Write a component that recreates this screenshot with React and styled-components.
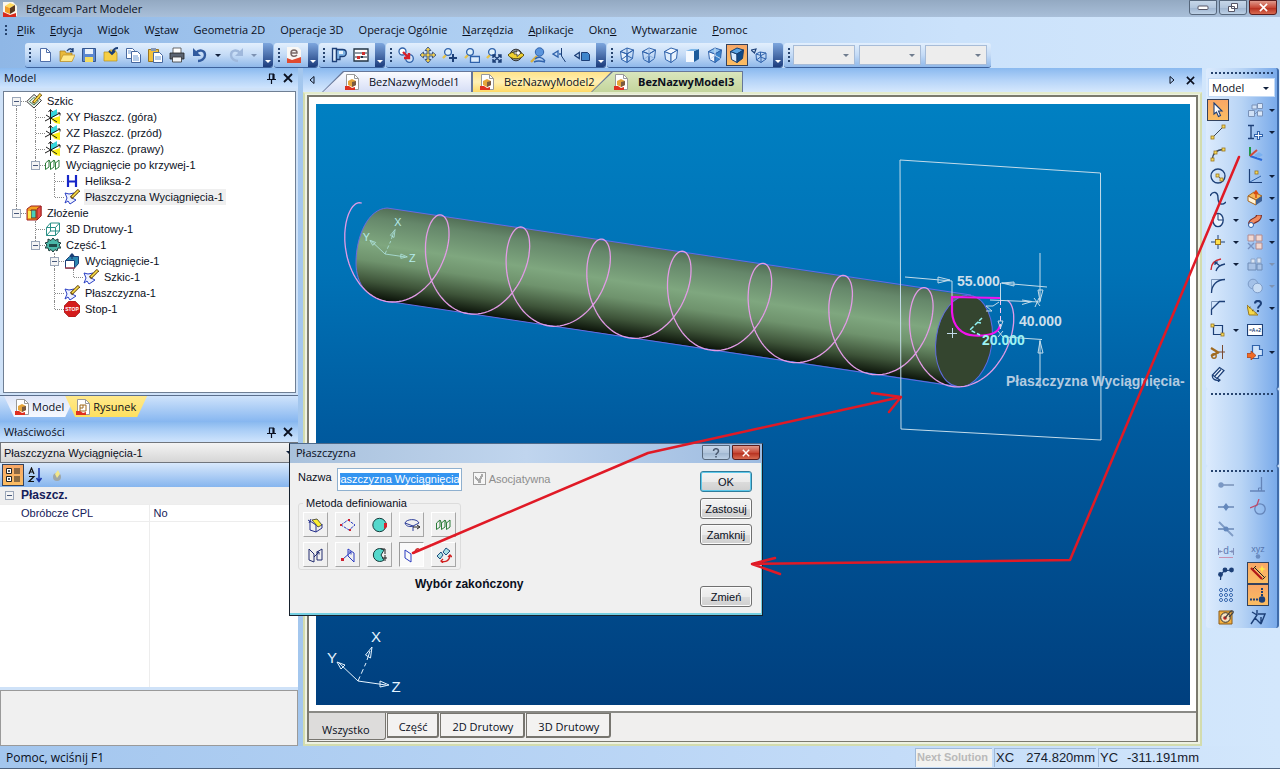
import React from 'react';
import styled, { createGlobalStyle, css } from 'styled-components';

const ui = '"Open Sans", "Noto Sans", sans-serif';
const sans = '"Liberation Sans", Arial, sans-serif';
const navy = '#1c3f77';
const blue = '#2f62ab';

const Global = createGlobalStyle`
  * { box-sizing: border-box; }
  body { margin: 0; font-family: ${ui}; font-size: 11px; color: #0a0f1c; }
  button, input, select { font: inherit; color: inherit; margin: 0; padding: 0; border: 0; background: none; }
  ul { list-style: none; margin: 0; padding: 0; }
  svg { display: block; flex: none; }
`;

/* ---------- icons ---------- */

const L = ({ d, c = navy, w = 1, f = 'none', ...r }) => (
  <path d={d} stroke={c} strokeWidth={w} fill={f} {...r} />
);
const Q = ({ x, y, s = 3 }) => (
  <rect x={x} y={y} width={s} height={s} fill="#f7dc5a" stroke="#9a7420" strokeWidth=".8" />
);
const Lens = ({ x = 6, y = 5, c = '#e6c34a' }) => (
  <>
    <L d={`M${x - 2} ${y + 3}L${x - 5} ${y + 6}`} c={c} w={2.4} />
    <circle cx={x} cy={y} r="3.4" fill="#dff0fb" stroke={blue} strokeWidth="1.3" />
  </>
);
/* left face, right face and lid of a box seen from above */
const Cube = ({ c = blue, inner = 'none', front = 'none', side = 'none', top = 'none' }) => (
  <>
    <L d="M1.500 4.500L8 7v8.500L2.500 12.500z" c={c} f={front} />
    <L d="M1.500 4.500L8 1l6.500 2L8 7z" c={c} f={top} />
    <L d="M8 7l6.500-4-1 8.500L8 15.500z" c={c} f={side} />
    {inner !== 'none' && <L d="M8 1v7.500L2.500 12.500M8 8.500l5.500 3" c={inner} />}
  </>
);
const PlaneFeature = () => (
  <>
    <L d="M1 4l4 1 5-1-2 5 4 2-6 4-2-3-3 2 2-5z" c="#2a3fc4" f="#eef2ff" />
    <L d="M7 9l8-8" c="#6a4c10" w={3.200} />
    <L d="M8 8l6.500-6.500" c="#ffe14a" w={1.600} />
  </>
);
const BasePlane = () => (
  <>
    <path d="M5 4l7-4v6l-7 4z" fill="#35d6dd" />
    <path d="M6 10l9-3v8l-5-1z" fill="#fbee16" />
    <L d="M5.500 1v14M0 12l15-8M1 6l11 7" c="#1a1a1a" />
    <L d="M3.500 3l2-2.500 2 2.500M12.500 4H15v2.500" c="#1a1a1a" />
  </>
);
const Coil = ({ c = '#2c7d3a' }) => (
  <L d="M.500 12.500V6L4 3v7zM5.500 12.500V6L9 3v7zM10.500 12.500V6L14 3v7zM4 3l1.500 3M9 3l1.500 3" c={c} />
);
const PageMark = ({ yellow }) => (
  <>
    <path d="M2.500.5h8l4 4v11h-12z" fill="#fff" stroke="#9a9a9a" />
    <L d="M10.500.5v4h4" c="#9a9a9a" />
    {yellow ? (
      <L d="M5 6h6v6H5zM8 6v3H5" c="#a06a1c" />
    ) : (
      <path d="M4 7l4-2 4 2v4l-4 2-4-2z" fill="#e6a53a" />
    )}
    {!yellow && <path d="M8 8l4-1v4l-4 2z" fill="#7a5a40" />}
    <path d="M1 12h4l3 2 3-1v3H1z" fill="#df3020" />
  </>
);

const glyphs = {
  app: (
    <>
      <path d="M1 1h10l4 4v10H1z" fill="#fbf6ea" />
      <path d="M3 5l5-3 5 2-5 3z" fill="#ffd95c" />
      <path d="M3 5l5 2v6l-5-2z" fill="#f09a28" />
      <path d="M8 7l5-3v6l-5 3z" fill="#5a3a20" />
      <path d="M1 11l7 3 6-2v4H1z" fill="#d8281c" />
    </>
  ),
  page: <PageMark />,
  drawing: <PageMark yellow />,
  new: <><path d="M3.500 1.500h6l4 4v9h-10z" fill="#fdfeff" stroke="#4f6ea8" /><L d="M9.500 1.500v4h4" c="#4f6ea8" /></>,
  open: <><path d="M1 4h5l1 2h6v8H1z" fill="#e9b93a" stroke="#a57a1a" strokeWidth=".7" /><path d="M4 8h12l-3 6.500H1z" fill="#ffe88a" stroke="#b98c22" strokeWidth=".7" /><L d="M8 4c2-3 5-3 6 0M14 1v3.500h-3" c={navy} w={1.300} /></>,
  save: <><path d="M1.500 1.500h13v13h-13z" fill="#5a86cf" stroke="#34568f" /><path d="M4 2h8v5H4z" fill="#e9f1fb" /><path d="M4 10h8v5H4z" fill="#f3dc62" /></>,
  close: <><path d="M1 5h5l1-2h5l2 3v8H1z" fill="#f7cf45" stroke="#b38c1c" strokeWidth=".7" /><L d="M15 1c-4 0-5 2-6 5M6 4l3 3 3-3" c={navy} w={1.800} /></>,
  copy: <><path d="M1.500 1.500h6l2 2v8h-8z" fill="#fff" stroke="#47689f" /><path d="M6.500 4.500h6l3 3v8h-9z" fill="#fff" stroke="#47689f" /><L d="M8 9h5M8 11h6M8 13h6M3 4h3M3 6h3" c="#6c9ad4" /></>,
  paste: <><path d="M1.500 2.500h10v12h-10z" fill="#f2c13c" stroke="#9a7520" /><path d="M4 1h5v3H4z" fill="#8597b5" /><path d="M6.500 5.500h6l3 3v7h-9z" fill="#fff" stroke="#47689f" /><L d="M8 10h6M8 12h6" c="#6c9ad4" /></>,
  print: <><path d="M4 1h8v6H4z" fill="#fff" stroke="#444" strokeWidth=".8" /><path d="M1 6h14v6H1z" fill="#5b6472" stroke="#222" strokeWidth=".8" /><path d="M3.500 10h9v5h-9z" fill="#f4f6f8" stroke="#333" strokeWidth=".8" /></>,
  undo: <><L d="M4 6c3-4 9-3 9 2 0 4-4 6-7 6" c="#315a9e" w={2.400} /><path d="M1 1v8h8z" fill="#315a9e" /></>,
  redo: <><L d="M12 6c-3-4-9-3-9 2 0 4 4 6 7 6" c="#9fb8dc" w={2.400} /><path d="M15 1v8H7z" fill="#9fb8dc" /></>,
  e: <><path d="M1 0h11l3 3v13H1z" fill="#f9f7f4" /><path d="M1 11l5 2 9-3v6H1z" fill="#e04a30" /><L d="M5 6h6c0-4-6-4-6 0s4 4 6 2" c="#7a6a68" w={1.500} /></>,
  part: <><L d="M1.500 1.500h4v13h-4z" c={navy} w={1.300} f="#dcecfb" /><path d="M5.500 2.500h6c5 0 5 7 0 7H9v3H5.500z" fill="#7fb4e4" stroke={navy} strokeWidth="1.300" /><path d="M8 4h4v3H8z" fill="#e8f3fd" /></>,
  sliders: <><path d="M1 2h14v12H1z" fill="#fff" stroke="#234" strokeWidth="1.300" /><L d="M2 6h12M2 10h12" c="#234" /><path d="M4 9h3v3H4zM9 5h3v3H9z" fill="#cc3030" /><path d="M8 9h2v2H8z" fill="#234" /></>,
  pair: <><circle cx="4.500" cy="4.500" r="3.500" fill="#fff" stroke={blue} strokeWidth="1.300" /><circle cx="11.500" cy="11.500" r="3.800" fill="#cfe4fa" stroke={blue} strokeWidth="1.300" /><path d="M5 5l5 5M6 11h5V6" stroke="#d8202a" strokeWidth="2.400" fill="none" /></>,
  pan: <path d="M8 0l3 3.500H9V7h3.500V5L16 8l-3.500 3V9H9v3.500h2L8 16l-3-3.500h2V9H3.500v2L0 8l3.500-3v2H7V3.500H5z" fill="#f5d04a" stroke="#344f80" strokeWidth=".9" />,
  zoomIn: <><Lens /><L d="M11 7v8M7 11h8" c={navy} w={2} /></>,
  zoomBox: <><Lens /><path d="M6.500 9.500h9v6h-9z" fill="#dcecfc" stroke={blue} strokeWidth="1.300" /></>,
  zoomFit: <><Lens /><L d="M7 8l8 7M15 8l-8 7M7 11V8h3M12 8h3v3M15 12v3h-3M10 15H7v-3" c={navy} w={1.400} /></>,
  orbit: <><circle cx="8" cy="8" r="5.800" fill="#8a929e" stroke="#333" /><path d="M0 8c3-4 13-4 16 0-3 5-13 5-16 0z" fill="#f0d030" stroke="#5a5010" /><path d="M6 5h3V2.500L13 6 9 9.500V7H6z" fill="#fff" stroke="#333" strokeWidth=".8" /></>,
  rotate: <><L d="M1 15l6-6" c="#d8b040" w={2.400} /><circle cx="9.500" cy="5" r="4.200" fill="#5a94dc" stroke={blue} /><L d="M5 12c3-3 7-2 10 2M4 15c4-2 7-1 11 0" c={blue} w={1.400} /></>,
  viewOpen: <><L d="M1 7l5-3v6zM7 7h3" c={blue} w={1.300} /><L d="M9.500 1v8l4 6" c={navy} /></>,
  viewBody: <><L d="M.800 8.500l4.500-3v6z" c={navy} w={1.300} /><path d="M7.500 5.500h6l2 2v6h-8z" fill="#3e86cc" stroke={navy} /></>,
  wire: <Cube inner={blue} front="#e4f0fc" />,
  wireHidden: <Cube inner="#8fb2de" />,
  wireOutline: <Cube front="#dcebfb" top="#f2f8ff" side="#e8f2fd" />,
  shadedSoft: <><path d="M1 4h8v11H1z" fill="#f4f9ff" /><path d="M9 4l5-2v10l-5 3z" fill="#1c5c9c" /><path d="M1 4l5-2h8L9 4z" fill="#7cb6e8" /></>,
  shadedEdge: <Cube front="#f3f9ff" side="#3c86cc" top="#8fc2ee" inner="#c8dcf2" />,
  shaded: <Cube front="#d5eaff" side="#0f4a88" top="#5aa5e4" c="#163f70" />,
  eyeCube: <><L d="M0 3l5-1-1.500 4z" c={navy} w={1.200} /><L d="M5 7l5 1.500v7L5.500 13zM5 7l4-2 6 1-5 2.500M15 6v6l-5 3.500M9.500 5v5l-4 3M9.500 10l5.500 2" c={blue} /></>,
  sketch: <><L d="M.700 8.500L8 1.500l7.500 6L8 15z" c="#3a3a3a" f="#eef2ee" /><L d="M3.500 8.500L8 4.500l4.500 3.500L8 12z" c="#3a7a50" f="#fff" /><L d="M7 10l8-9" c="#7a5810" w={3.200} /><L d="M8 9l6.500-7.500" c="#ffe14a" w={1.600} /></>,
  basePlane: <BasePlane />,
  coil: <Coil />,
  helix: <L d="M4 2v12M12 2v12M4 8.500h8" c="#1626c8" w={2.200} />,
  plane: <PlaneFeature />,
  assembly: <><path d="M1 4l4-3h10v10l-4 4H1z" fill="#f4a020" stroke="#a02020" /><path d="M5 5h5v8H5z" fill="#48d0b8" stroke="#7a2a10" /><path d="M11 4l4-3v10l-4 4z" fill="#e8504a" stroke="#a02020" /><path d="M2 6h3v7H2z" fill="#ffe84a" /></>,
  wire3d: <L d="M1.500 6.500h9v8h-9zM1.500 6.500l4-4.500h9l-4 4.500M14.500 2v8l-4 4.500M5.500 2v8l-4 4.500M5.500 10h9" c="#2a9086" f="none" />,
  gear: <><path d="M0 6l3-1 0-3 3 1.500L8 1l2 2.500L13 2v3l3 1-2 2 2 3-3 0-1 3-2-1.500L8 15l-2-2.500L4 14l-1-3-3 0 2-3z" fill="#4ab8a8" stroke="#1c3a38" /><path d="M4 7h8v3H4z" fill="#1f4a48" /></>,
  extrude: <><path d="M1.500 7.500l4-4h9v7l-4 4.500h-9z" fill="#2a86b0" stroke={navy} /><path d="M1.500 7.500h9V15h-9z" fill="#fff" stroke={navy} /><L d="M1 15h10" c="#d03030" /><L d="M8 6V1M6 3l2-2 2 2" c={navy} w={1.300} /></>,
  stop: <><path d="M5 0h6l5 5v6l-5 5H5l-5-5V5z" fill="#d41c1c" stroke="#8a1010" strokeWidth=".6" /><text x="8" y="10" fontSize="5" fontWeight="700" fill="#fff" textAnchor="middle" fontFamily="Liberation Sans">STOP</text></>,
  categories: <><path d="M1.500 1.500h5v5h-5zM1.500 9.500h5v5h-5z" fill="#fff" stroke="#222" /><L d="M3 4h2M4 3v2M3 12h2M4 11v2M9 2h6M9 4h6M9 6h6M9 10h6M9 12h6M9 14h6" c="#222" /></>,
  sortAz: <><L d="M2 7l2.500-6L7 7M3 5h3M2 9.500h5l-5 5h5" c="#111" w={1.200} /><L d="M12 1v13M9.500 11l2.500 3.500 2.500-3.500" c="#1432a8" w={1.500} /></>,
  star: <><circle cx="8" cy="10" r="4" fill="#9fa7a8" /><path d="M9 3l2 4-3 4-2-4z" fill="#f2e68a" /></>,
  pointer: <path d="M4 1l8 8H8.500l2 4.500-2 1-2-4.500L4 12z" fill="#fff" stroke={navy} strokeWidth="1.100" />,
  line: <><L d="M2.500 13.500l11-11" c="#3a4858" /><Q x={1} y={12} /><Q x={12} y={1} /></>,
  arc: <><L d="M2.500 13.500c0-6 4-10 11-10" c="#3a4858" w={1.300} /><Q x={1} y={12} /><Q x={4} y={5} /><Q x={12} y={2} /></>,
  circle: <><circle cx="8" cy="8" r="7" fill="none" stroke={navy} strokeWidth="1.300" /><L d="M8 8l4 4" c="#5a6a7a" /><Q x={6} y={6} /><Q x={10} y={10} /></>,
  spline: <L d="M0 6c3-6 8-4 8 2s4 8 8 4" c={navy} w={1.400} />,
  ellipse: <><ellipse cx="8" cy="8" rx="5.200" ry="6.700" fill="#eaf4ff" stroke={navy} strokeWidth="1.300" /><L d="M8 2v6h5" c={navy} /></>,
  point: <><L d="M8 1v14M1 8h14" c={navy} /><rect x="5.500" y="5.500" width="5" height="5" fill="#ffe04a" stroke="#9a7420" /></>,
  offset: <><L d="M1 14c0-7 4-10 10-11" c="#d22a30" w={1.400} /><L d="M6 15c1-4 4-6 9-7" c={navy} w={1.300} /><L d="M10 10L5 6M5 9V6h3" c={navy} w={1.200} /></>,
  fillet: <><L d="M1.500 15V1.500H15" c="#7a94b8" /><L d="M1.500 15C1.500 7 7 1.500 15 1.500" c={navy} w={1.300} /></>,
  chamfer: <><L d="M1.500 15V1.500H15" c="#7a94b8" /><L d="M1.500 15V9.500l8-8H15" c={navy} w={1.300} /></>,
  rect: <><path d="M3.500 3.500h9v9h-9z" fill="none" stroke={navy} strokeWidth="1.200" /><Q x={1} y={2} /><Q x={11} y={11} /></>,
  trim: <><L d="M1 4l8 5M1 12l8-4" c="#a06a20" w={2.200} /><circle cx="4" cy="12" r="2.200" fill="none" stroke="#a06a20" strokeWidth="1.400" /><L d="M12.500 1v14M9 8h6" c="#7a4a30" /></>,
  clip: <><path d="M2.500 9l7-7.500 4.500 3-7 8z" fill="#eaf4ff" stroke={navy} strokeWidth="1.200" /><L d="M4.500 10.500l6.500-7M2.500 9c-1 4 3 6 7 5M7 12l3 2-2 2" c={navy} w={1.200} /></>,
  array3d: <><path d="M1.500 8.500h6v6h-6zM5 3h5v4H5z" fill="#cfe0f6" stroke="#7a92b8" /><path d="M10.500 1.500h5v5h-5zM10.500 9h5v5h-5z" fill="#dbe8f9" stroke="#7a92b8" /><L d="M8 12l4-4" c="#7a92b8" /></>,
  dim: <><L d="M1 1.500h6M4 1.500v13M1 14.500h6" c={navy} w={1.300} /><path d="M10.500 7.500h2v3h3v2h-3v3h-2v-3h-3v-2h3z" fill="#fff" stroke={blue} strokeWidth="1.100" /></>,
  axes: <><L d="M3 1v9" c="#1f9a4a" w={2} /><L d="M3 10l12 4" c="#2c6ad8" w={2.200} /><L d="M3 10l7-6" c="#d04a3a" w={2} /><path d="M7 9l5-3 4 3-5 3z" fill="#7ab0f0" /></>,
  angle: <><L d="M2.500 1v13.500H15" c={navy} w={1.200} /><L d="M3 14L14 8" c={blue} /><Q x={8} y={3} /></>,
  solid: <><path d="M1 6l6-4 8 4-6 4z" fill="#f5b85a" stroke="#a8661c" /><path d="M1 6l8 4v5l-8-4z" fill="#fff3d8" stroke="#a8661c" /><path d="M9 10l6-4v5l-6 4z" fill="#3d5f94" /><L d="M9 8V2M7 4l2-3 2 3" c="#d84a10" w={1.500} /></>,
  sweep: <><L d="M4 13c-1-6 8-3 8-10" c="#7a2a20" w={6} /><L d="M4 12.500c0-6 8-3 8-9" c="#f08a60" w={3.800} /><circle cx="4" cy="13" r="2.500" fill="#fff" stroke={blue} /></>,
  pattern: <><path d="M1 1h6v6H1zM9 1h6v6H9zM9 9h6v6H9z" fill="#f2d8d0" stroke="#b08a90" /><L d="M1 9l6 6M7 9l-6 6" c="#7a92c0" w={1.400} /></>,
  lock: <><path d="M1 7h8v7H1zM10 8h5v6h-5z" fill="#a9c3e6" stroke="#6f8cb6" /><path d="M4 3h4v4H4zM10 2h4v5h-4z" fill="#dbe5f2" stroke="#8da4c6" /></>,
  union: <><circle cx="6" cy="6" r="4.800" fill="#a4c1e8" stroke="#7d9cc8" /><circle cx="10.500" cy="10" r="4.800" fill="#c8dcf4" stroke="#7d9cc8" /></>,
  measure: <><path d="M0 5l11 10H2z" fill="#f6d848" stroke="#9a7a20" /><L d="M2 8l1.500-1M5 11l1.500-1M8 13.500l1-1" c="#7a5a10" /><L d="M8 3.500c0-3.500 6-3.500 6 0 0 2.500-3 2-3 5M11 10v2" c={navy} w={2} /></>,
  formula: <><path d="M.5 2.500h15v11H.5z" fill="#fff" stroke={navy} strokeWidth="1.200" /><text x="8" y="10" fontSize="5" fontWeight="700" fill={navy} textAnchor="middle" fontFamily="Liberation Sans">=A+2</text></>,
  importBody: <><path d="M5.500 1.500h7v4h3v6h-4v3h-6z" fill="#cfe3fa" stroke={blue} strokeWidth="1.200" /><path d="M0 9.500h4V7l5 4.500L4 16v-2.500H0z" fill="#f06a24" stroke="#a83a10" strokeWidth=".7" /></>,
  endPt: <><L d="M3 8h13" c="#8ba4c8" w={2} /><circle cx="3" cy="8" r="2.700" fill="#7a98c4" /></>,
  midPt: <><L d="M0 8h16" c="#7f9cc6" w={2} /><path d="M8 4l3 4-3 4-3-4z" fill="#6488bc" /></>,
  crossPt: <><L d="M0 8h16M1 1l14 14" c="#7f9cc6" w={1.800} /><circle cx="8" cy="8" r="2.500" fill="#6488bc" /></>,
  distPt: <><L d="M.500 5v7M15.500 5v7M1 8.500h3.500M11.500 8.500H15M2.500 7L1 8.500 2.500 10M13.500 7L15 8.500 13.500 10" c="#8090bc" /><L d="M1 14.500h14" c="#c890b0" /><text x="8" y="11" fontSize="10" fill="#5f7cb2" textAnchor="middle" fontFamily="Liberation Sans">d</text></>,
  chainPt: <><L d="M2.500 15c0-8 3-10 12-10" c={navy} w={1.200} /><circle cx="2.500" cy="9.500" r="2.400" fill={navy} /><circle cx="7" cy="5" r="2.400" fill={navy} /><circle cx="13.500" cy="5" r="2.400" fill={navy} /></>,
  gridPt: <>{[3, 8, 13].map((x) => [3, 8, 13].map((y) => <circle key={x + '-' + y} cx={x} cy={y} r="1.500" fill="#eaf3ff" stroke={blue} />))}</>,
  targetPt: <><path d="M1 2h13v13H1z" fill="#f4b040" stroke="#8a5a18" /><circle cx="7.500" cy="8.500" r="4.800" fill="#f5e2c0" stroke="#333" /><circle cx="7" cy="9" r="1.800" fill="#c02020" /><L d="M7 9l5-6c2-2 4-1 3 1l-4 4" c="#444" w={1.200} /></>,
  perp: <><L d="M0 14h15M11.500 14V0" c="#6484b8" w={1.300} /><L d="M8.500 14v-3h3" c="#6484b8" /></>,
  tangent: <><circle cx="10" cy="10" r="5.200" fill="none" stroke="#6484b8" strokeWidth="1.300" /><L d="M0 9l7-3 2-6" c="#c04a6a" w={1.300} /></>,
  xyz: <><text x="8" y="9" fontSize="9" fill="#5676ae" textAnchor="middle" fontFamily="Liberation Sans">xyz</text><circle cx="8" cy="13.500" r="2.300" fill="#6a8cc0" /></>,
  snapLine: <><L d="M1 3l11 11" c="#b01818" w={2.200} /><L d="M4 2l11 11M3 4l3-3M12.500 14.500l3-3" c="#222" /><path d="M12 0l1 3 3 1-3 1-1 3-1-3-3-1 3-1z" fill="#ffe84a" /></>,
  snapAxis: <><L d="M12 1v11" c={navy} w={2} strokeDasharray="2 1" /><L d="M0 12.500h12" c={navy} w={2} strokeDasharray="2 1" /><circle cx="12" cy="12.500" r="3.200" fill={navy} /></>,
  run: <L d="M2 3l5 3M7 1v5l-6 9M5 9l6 6M8 5h7l-4 10V8" c={navy} w={1.400} />,
  dlgExtents: <><path d="M4 3l5-1 5 6-4 2z" fill="#fbee30" stroke="#333" strokeWidth=".8" /><L d="M2 4v9l6 2 6-4V7M2 4l6 4v7M0 3l3 2M1 6l2-4" c="#27308c" /></>,
  dlgPoints: <><L d="M1 8l7-5 7 5-6 5z" c="#2a3ac0" strokeDasharray="3 1" /><path d="M0 7h2v2H0zM8 2h2v2H8zM9 12h2v2H9z" fill="#d02030" /></>,
  dlgSphere: <><circle cx="7.500" cy="8" r="6.700" fill="#54d8cc" stroke="#173a3a" /><path d="M12 6h3v4l-3 2z" fill="#d8202a" /></>,
  dlgCurve: <><L d="M1 6c1-4 12-5 14 0l-6 3zM1 6c1 4 6 4 8 3v5" c="#2e3f9a" /><L d="M9 10h6M13 8l3 2-3 2" c="#222" /></>,
  dlgOffset: <L d="M1 13V2l5 5v8zM9 13V5l5-3v11zM6 10l5-5M8.500 5H11v2.500" c="#222c70" />,
  dlgNormal: <><L d="M8 9V2l6 4v9zM3 12l8-7M8.500 5H11v2.500" c="#2a3ac0" /><path d="M1 11h3v3H1z" fill="#d02030" /></>,
  dlgTangent: <><path d="M12 3a6.500 6.500 0 1 0 0 10L9 8z" fill="#54d8cc" stroke="#173a3a" /><L d="M9 2h4v5M10 11h5M13 8v6" c="#222" /></>,
  dlgCurveEnd: <><L d="M1 3l6 4v8l-6-4z" c="#2a3ac0" /><L d="M8 6c4 2 2-6 7-4" c="#c82a2a" w={1.300} /></>,
  dlgRound: <><L d="M1 9l4-4 2 3-3 4zM7 5l3-4 4 3-4 4z" c="#1f4f80" f="#a8e0e4" /><L d="M5 14c5 2 9-1 9-6M12 10l2-2 2 2M7 12l-2 2 2 2" c="#d02020" w={1.300} /></>,
};

const Icon = ({ name, size = 16 }) => (
  <svg width={size} height={size} viewBox="0 0 16 16" aria-hidden="true">{glyphs[name]}</svg>
);

/* ---------- window chrome ---------- */

const Window = styled.div`
  position: relative;
  min-height: 100vh;
  display: flex;
  flex-direction: column;
  overflow: hidden;
  background: linear-gradient(90deg, #8fb7e6, #a9cbf0 30%, #cbe2fb 75%, #d3e7fc);
`;

const TitleBar = styled.header`
  display: flex;
  align-items: center;
  gap: 8px;
  height: 17px;
  padding: 0 3px 0 2px;
  background: linear-gradient(#93a9c2, #a9bfd9);
`;
const TitleText = styled.h1`
  flex: 1;
  margin: 0;
  font-size: 11px;
  line-height: 16px;
  font-weight: 400;
`;
const Controls = styled.div`
  display: flex;
  gap: 2px;
  align-self: flex-start;
`;
const WinButton = styled.button`
  display: grid;
  place-items: center;
  width: 28px;
  height: 15px;
  border: 1px solid ${(p) => (p.$danger ? '#5a1c1c' : '#56677c')};
  border-radius: 0 0 3px 3px;
  background: ${(p) => (p.$danger
    ? 'linear-gradient(#e09a8c, #c84a38 50%, #b42c1c 51%, #d86a50)'
    : 'linear-gradient(#c6d6e8, #b2c6dd 50%, #9db4cf 51%, #bcd0e6)')};
`;

const MenuBar = styled.nav`
  display: flex;
  align-items: center;
  gap: 15px;
  height: 26px;
  padding-left: 5px;
`;
const MenuItem = styled.button`
  white-space: nowrap;
  line-height: 16px;
`;
const Grip = styled.span`
  flex: none;
  width: 2px;
  height: ${(p) => p.$h || 14}px;
  margin: 0 ${(p) => p.$after || 0}px 0 ${(p) => p.$before || 0}px;
  background: repeating-linear-gradient(#27446f 0 2px, transparent 2px 4px);
`;

const ToolRow = styled.div`
  display: flex;
  gap: 1px;
  height: 25px;
  padding-left: 25px;
`;
const ToolBar = styled.div`
  display: flex;
  align-items: center;
  height: 25px;
  border-radius: 3px;
  background: linear-gradient(#e2effd, #c4dbf6 50%, #8fb8ea);
  border-bottom: 1px solid #3d629c;
`;
const ToolButton = styled.button`
  display: grid;
  place-items: center;
  width: ${(p) => p.$w || 22}px;
  height: 22px;
  ${(p) => p.$on && css`
    border: 1px solid #33425e;
    background: linear-gradient(#f8a766, #fbbd62);
  `}
`;
const Caret = styled.span`
  width: 0;
  height: 0;
  border: 3px solid transparent;
  border-top-color: ${(p) => p.$c || '#10203c'};
  border-bottom: 0;
`;
const Overflow = styled.button`
  display: flex;
  align-items: flex-end;
  justify-content: center;
  width: 10px;
  height: 24px;
  margin-left: 3px;
  padding-bottom: 4px;
  border-radius: 0 3px 3px 0;
  background: linear-gradient(#7da6de, #1c3c7c);
`;
const Combos = styled.div`
  display: flex;
  gap: 4px;
  padding-right: 4px;
`;
const Combo = styled.label`
  position: relative;
  display: block;
  width: ${(p) => p.$w || '62px'};
  height: ${(p) => p.$h || 20}px;
  border: 1px solid ${(p) => p.$line || '#a7bcd8'};
  background: ${(p) => p.$bg || '#ededed'};
  select {
    appearance: none;
    width: 100%;
    height: 100%;
    padding: 0 3px;
    font-family: ${(p) => p.$font || ui};
    line-height: 16px;
  }
  ${Caret} { position: absolute; right: 5px; top: 8px; }
`;

/* ---------- body ---------- */

const Body = styled.div`
  flex: 1;
  display: flex;
  min-height: 0;
`;
const Sidebar = styled.aside`
  flex: none;
  width: 298px;
  display: flex;
  flex-direction: column;
  background: #cfe2f8;
`;
const Pane = styled.section`
  flex: ${(p) => p.$grow} 1 0;
  display: flex;
  flex-direction: column;
  min-height: 0;
`;
const PaneHead = styled.div`
  display: flex;
  align-items: center;
  gap: 3px;
  height: 20px;
  padding: 0 3px 0 4px;
  background: linear-gradient(#8ab9ef, #a9cdf6 40%, #cfe4fd);
  line-height: 16px;
  h2 { flex: 1; margin: 0; font-size: 11px; font-weight: 400; }
  button { display: grid; place-items: center; width: 14px; height: 16px; }
`;
const Tree = styled.ul`
  flex: 1;
  margin: 3px 2px 0 3px;
  padding: 1px 0 0 3px;
  border: 1px solid #6f7f94;
  background: #fff;
  font: 11px/16px ${sans};
`;
const TreeRow = styled.li`
  display: flex;
  height: 16px;
  white-space: nowrap;
`;
const Guide = styled.span`
  position: relative;
  flex: none;
  width: 19px;
  height: 16px;
  &::before {
    content: '';
    position: absolute;
    left: 9px;
    top: ${(p) => (p.$top ? 8 : 0)}px;
    height: ${(p) => (p.$end ? 8 : 16)}px;
    border-left: ${(p) => (p.$line ? '1px dotted #8a8a8a' : '0')};
  }
  &::after {
    content: '';
    position: absolute;
    left: 10px;
    right: 0;
    top: 8px;
    border-top: ${(p) => (p.$elbow ? '1px dotted #8a8a8a' : '0')};
  }
`;
const Expander = styled.button`
  position: absolute;
  z-index: 1;
  left: 5px;
  top: 4px;
  width: 9px;
  height: 9px;
  border: 1px solid #9aa6b8;
  background: linear-gradient(#46577a, #46577a) center / 5px 1px no-repeat #f4f4f4;
`;
const TreeLabel = styled.span`
  margin-left: 4px;
  padding: 0 2px 0 1px;
  background: ${(p) => (p.$on ? '#efefef' : 'none')};
`;
const PaneTabs = styled.div`
  display: flex;
  height: 27px;
  margin-top: 2px;
  padding-left: 4px;
  border-top: 1px solid #5c6f8c;
  background: linear-gradient(#cfe3fb, #86b6f0);
`;
const PaneTab = styled.button`
  display: flex;
  align-items: center;
  gap: 2px;
  height: 21px;
  padding: 0 11px 0 10px;
  margin-right: -10px;
  clip-path: polygon(0 0, 100% 0, calc(100% - 10px) 100%, 10px 100%);
  background: ${(p) => (p.$yellow ? 'linear-gradient(#ffe98c, #ffe05e)' : 'linear-gradient(#dfe6f8, #f6f9ff)')};
  line-height: 16px;
`;
const PropTools = styled.div`
  display: flex;
  height: 24px;
  padding: 1px 2px;
  background: linear-gradient(#d9e9fc, #86b5ee);
`;
const PropTable = styled.table`
  width: 100%;
  border-collapse: collapse;
  background: #fff;
  font: 11px/16px ${sans};
  color: #15205a;
  th, td {
    height: 17px;
    padding: 0 4px;
    text-align: left;
    font-weight: 400;
    border-bottom: 1px solid #ededed;
  }
  th { width: 149px; padding-left: 21px; border-right: 1px solid #ededed; }
  tr:first-child th {
    position: relative;
    background: #efefef;
    font-size: 12px;
    font-weight: 700;
    border-right: 0;
  }
`;
const PropBody = styled.div`
  flex: 1;
  background: linear-gradient(90deg, transparent 149px, #ededed 149px 150px, transparent 150px) #fff;
`;
const PropHelp = styled.div`
  height: 56px;
  margin-top: 3px;
  border: 1px solid #9a9a9a;
  background: #f0f0f0;
`;

const Main = styled.main`
  flex: 1;
  min-width: 0;
  display: flex;
  flex-direction: column;
  margin: 0 2px 0 5px;
`;
const DocStrip = styled.div`
  display: flex;
  align-items: flex-start;
  height: 24px;
  padding: 3px 3px 0 0;
  background: linear-gradient(#8ab9ef, #b4d3f8 50%, #d6e8fd);
`;
const Spacer = styled.span`
  flex: 1;
`;
const NavButton = styled.button`
  display: grid;
  place-items: center;
  width: 18px;
  height: 18px;
`;
const DocTab = styled.button`
  position: relative;
  isolation: isolate;
  display: flex;
  align-items: center;
  gap: 9px;
  width: ${(p) => p.$w}px;
  height: 21px;
  padding-left: ${(p) => (p.$slant ? 22 : 7)}px;
  margin-left: ${(p) => p.$shift || 0}px;
  font-weight: ${(p) => (p.$on ? 700 : 400)};
  line-height: 16px;
  white-space: nowrap;
  &::before, &::after {
    content: '';
    position: absolute;
    z-index: -2;
    inset: 0;
    clip-path: polygon(${(p) => (p.$slant ? '21px' : '0')} 0, 100% 0, 100% 100%, 0 100%);
    background: #66779a;
  }
  &::after {
    z-index: -1;
    inset: 1px 1px 0;
    background: ${(p) => p.$bg};
  }
`;
const Frame = styled.div`
  flex: 1;
  display: flex;
  flex-direction: column;
  border: 2px solid #d3dcae;
  border-top-color: #e4eccd;
  padding: 1px 2px 2px;
  background: #eef2e2;
`;
const FrameInner = styled.div`
  flex: 1;
  display: flex;
  flex-direction: column;
  border: 2px solid #7b7a6e;
  border-bottom-width: 1px;
  background: #fff;
`;
const View = styled.div`
  flex: 1;
  margin: 7px 6px 6px 7px;
  background: linear-gradient(#0080c2, #0072b6 28%, #005a9e 55%, #003f7e);
  svg { width: 100%; height: 100%; }
`;
const SheetTabs = styled.div`
  display: flex;
  align-items: flex-start;
  gap: 2px;
  height: 30px;
  border-top: 2px solid #8a8a86;
  background: #f0efee;
`;
const SheetTab = styled.button`
  height: ${(p) => (p.$on ? 27 : 25)}px;
  padding: ${(p) => (p.$on ? '7px 15px 0 13px' : '3px 10px 0 11px')};
  margin-right: -1px;
  border: 1px solid #77756f;
  border-width: ${(p) => (p.$on ? '0 1px 1px 0' : '1px 2px 2px 1px')};
  border-radius: 0 0 3px 0;
  background: ${(p) => (p.$on ? '#dddcdb' : '#f3f2f1')};
  line-height: 16px;
  white-space: nowrap;
`;

const ToolDock = styled.aside`
  flex: none;
  width: 76px;
  padding: 0 1px 0 2px;
`;
const Palette = styled.div`
  height: ${(p) => p.$h}px;
  padding: 4px 0 0 1px;
  border-radius: 3px;
  border-right: 2px solid #3f6cab;
  background: linear-gradient(90deg, #dcebfd, #b8d4f5 50%, #79aaea);
`;
const PaletteGrip = styled.div`
  height: 2px;
  margin: 0 4px ${(p) => p.$gap || 0}px;
  background: repeating-linear-gradient(90deg, #27446f 0 2px, transparent 2px 4px);
`;
const ModeBox = styled.div`
  margin: 0 2px 2px 1px;
`;
const PaletteGrid = styled.div`
  display: grid;
  grid-template-columns: ${(p) => p.$cols};
  grid-auto-rows: 22px;
  align-items: center;
  justify-items: center;
`;

const StatusBar = styled.footer`
  display: flex;
  align-items: center;
  gap: 2px;
  height: 23px;
  padding: 2px 80px 1px 6px;
  border-bottom: 1px solid #4f637e;
  background: linear-gradient(90deg, #a3c6ee, #c4dcf8 70%, #d3e7fc);
  line-height: 18px;
  p { flex: 1; margin: 0; font-size: 12px; }
`;
const StatusCell = styled.div`
  display: flex;
  justify-content: space-between;
  width: ${(p) => p.$w}px;
  height: 19px;
  padding: 0 1px;
  border: 1px solid #9fb9d8;
  border-width: 1px 0 0 1px;
  font: ${(p) => (p.$off ? '700 11px/17px' : '400 13px/17px')} ${sans};
  color: ${(p) => (p.$off ? '#b9b9b9' : '#16202c')};
  background: ${(p) => (p.$off ? '#f2f2f0' : 'none')};
  white-space: nowrap;
`;

/* ---------- dialog ---------- */

const Dialog = styled.form`
  position: absolute;
  left: 289px;
  top: 443px;
  width: 474px;
  height: 173px;
  border: 1px solid #16202c;
  border-top-color: #4f6a8a;
  box-shadow: inset -1px -2px 0 #74cfe2;
  background: #f0f0f0;
  font: 11px/16px ${sans};
`;
const DialogTitle = styled.div`
  display: flex;
  align-items: flex-start;
  gap: 2px;
  height: 19px;
  padding: 1px 2px 0 6px;
  background: linear-gradient(90deg, #a9c1dc, #c0d5ee 50%, #9dbbe0);
  font: 11px/16px ${ui};
  span { flex: 1; }
`;
const DialogBody = styled.div`
  display: flex;
  justify-content: space-between;
  padding: 5px 10px 0 8px;
`;
const NameRow = styled.div`
  display: flex;
  align-items: flex-start;
  gap: 5px;
  label { line-height: 18px; }
`;
const NameInput = styled.input`
  width: 125px;
  height: 23px;
  padding: 3px 2px 5px;
  border: 1px solid #8fb0cf;
  background: linear-gradient(#3394f0, #3394f0) 2px 4px / 119px 12px no-repeat #fff;
  color: #fff;
  text-indent: -9px;
`;
const CheckLabel = styled.label`
  display: flex;
  align-items: center;
  gap: 3px;
  height: 21px;
  margin-left: 6px;
  color: #8d8d8d;
  input {
    appearance: none;
    width: 13px;
    height: 13px;
    border: 1px solid #a0a0a0;
    background: #f6f6f6;
  }
  input:checked {
    background: linear-gradient(45deg, transparent 3px, #a9a9a9 3px 5px, transparent 5px) 1px 1px / 6px 9px no-repeat,
      linear-gradient(115deg, transparent 5px, #a9a9a9 5px 7px, transparent 7px) 2px 1px / 9px 9px no-repeat, #f6f6f6;
  }
`;
const Methods = styled.fieldset`
  display: grid;
  grid-template-columns: repeat(5, 25px);
  gap: 5px 7px;
  width: 163px;
  margin: 4px 0 0;
  padding: 1px 4px 2px;
  border: 1px solid #dcdcdc;
  border-radius: 3px;
  legend { padding: 0 3px; }
`;
const MethodButton = styled.button`
  display: grid;
  place-items: center;
  height: 25px;
  border: 1px solid #fff;
  border-color: ${(p) => (p.$on ? '#9a9a9a #fff #fff #9a9a9a' : '#fff #a6a6a6 #a6a6a6 #fff')};
  background: ${(p) => (p.$on ? '#fafafa' : '#f0f0f0')};
`;
const Message = styled.output`
  display: block;
  margin: 6px 0 0 117px;
  font-size: 12px;
  font-weight: 700;
`;
const Actions = styled.div`
  display: flex;
  flex-direction: column;
  gap: 5px;
  padding-top: 3px;
`;
const PushButton = styled.button`
  width: 52px;
  height: 21px;
  margin-top: ${(p) => p.$gap || 0}px;
  border: 1px solid ${(p) => (p.$main ? '#2f7d9c' : '#707070')};
  border-radius: 3px;
  box-shadow: inset 0 0 0 1px ${(p) => (p.$main ? '#5ec8ea' : '#fbfbfb')};
  background: linear-gradient(#f3f3f3, #ebebeb 50%, #dcdcdc 51%, #cfcfcf);
`;

const Markup = styled.svg`
  position: absolute;
  inset: 0;
  width: 100%;
  height: 100%;
  pointer-events: none;
`;

/* ---------- data ---------- */

const menus = [
  ['', 'P', 'lik'], ['', 'E', 'dycja'], ['Wi', 'd', 'ok'], ['W', 's', 'taw'], ['Geometria 2D', '', ''],
  ['Operacje 3D', '', ''], ['Operacje Ogólnie', '', ''], ['', 'N', 'arzędzia'], ['', 'A', 'plikacje'],
  ['Okn', 'o', ''], ['Wytwarzanie', '', ''], ['', 'P', 'omoc'],
];

/* guides: ' ' empty, '|' passing line, 'T' branch, 'L' last branch, 'R' first root; a trailing '-' adds an expander */
const tree = [
  ['R-', 'sketch', 'Szkic'],
  ['|T', 'basePlane', 'XY Płaszcz. (góra)'],
  ['|T', 'basePlane', 'XZ Płaszcz. (przód)'],
  ['|T', 'basePlane', 'YZ Płaszcz. (prawy)'],
  ['|L-', 'coil', 'Wyciągnięcie po krzywej-1'],
  ['| T', 'helix', 'Heliksa-2'],
  ['| L', 'plane', 'Płaszczyzna Wyciągnięcia-1', true],
  ['L-', 'assembly', 'Złożenie'],
  [' T', 'wire3d', '3D Drutowy-1'],
  [' L-', 'gear', 'Część-1'],
  ['  T-', 'extrude', 'Wyciągnięcie-1'],
  ['  |L', 'plane', 'Szkic-1'],
  ['  T', 'plane', 'Płaszczyzna-1'],
  ['  L', 'stop', 'Stop-1'],
];

const dockTools = [
  ['pointer', 0, 'array3d', 1], ['line', 0, 'dim', 1], ['arc', 0, 'axes', 0], ['circle', 0, 'angle', 1],
  ['spline', 1, 'solid', 1], ['ellipse', 1, 'sweep', 1], ['point', 1, 'pattern', 1], ['offset', 1, 'lock', 2],
  ['fillet', 0, 'union', 2], ['chamfer', 0, 'measure', 1], ['rect', 1, 'formula', 0], ['trim', 0, 'importBody', 1],
  ['clip', 0, null, 0],
];
const snapTools = ['endPt', 'perp', 'midPt', 'tangent', 'crossPt', null, 'distPt', 'xyz', 'chainPt', 'snapLine', 'gridPt', 'snapAxis', 'targetPt', 'run'];
const methods = ['dlgExtents', 'dlgPoints', 'dlgSphere', 'dlgCurve', 'coil', 'dlgOffset', 'dlgNormal', 'dlgTangent', 'dlgCurveEnd', 'dlgRound'];

/* ---------- parts ---------- */

const Tools = ({ names, on }) => names.map((n) => (
  <ToolButton key={n} type="button" aria-label={n} $on={n === on}><Icon name={n} /></ToolButton>
));
const More = () => <Overflow type="button" aria-label="Więcej"><Caret $c="#fff" /></Overflow>;

const Cross = ({ c = '#0a1020', s = 10 }) => (
  <svg width={s} height={s} viewBox="0 0 10 10"><L d="M1 1l8 8M9 1L1 9" c={c} w={1.800} /></svg>
);
const Pin = () => (
  <svg width="9" height="11" viewBox="0 0 9 11"><L d="M2.500 1v5M6 1v5M7 1v5M2 1h5M0 6.500h9M4.500 7v4" c="#0a1020" w={1.200} /></svg>
);
const PaneTitle = ({ children }) => (
  <PaneHead>
    <h2>{children}</h2>
    <button type="button" aria-label="Przypnij"><Pin /></button>
    <button type="button" aria-label="Zamknij panel"><Cross /></button>
  </PaneHead>
);

const TreeItem = ({ guides, icon, label, on }) => {
  const open = guides.endsWith('-');
  const cells = open ? guides.slice(0, -1) : guides;
  return (
    <TreeRow>
      {[...cells].map((g, i) => (
        <Guide key={i} $line={g !== ' '} $top={g === 'R'} $end={g === 'L'} $elbow={'TLR'.includes(g)}>
          {open && i === cells.length - 1 && <Expander type="button" aria-label="Zwiń" />}
        </Guide>
      ))}
      <Icon name={icon} />
      <TreeLabel $on={on}>{label}</TreeLabel>
    </TreeRow>
  );
};

const helixPath = (() => {
  const pts = [];
  for (let t = -3.4; t < 14 * Math.PI + 2.9; t += 0.08) {
    const x = 396 + 12.84 * t - 2 * Math.cos(t) + 29 * Math.sin(t);
    const y = 255.5 + 1.93 * t + 46.5 * Math.cos(t) - 3 * Math.sin(t);
    pts.push(`${x.toFixed(1)} ${y.toFixed(1)}`);
  }
  return 'M' + pts.join('L');
})();

const Triad = ({ x, y, k = 1, c = '#e6f4ff' }) => (
  <g transform={`translate(${x} ${y}) scale(${k})`} fill="none" stroke={c}>
    <path d="M0 0L8 -18" strokeDasharray="5 3" />
    <path d="M14 -34L7.500 -26l5 3z M12 -30L9 -21" />
    <path d="M0 0L-19 -18M-21 -19l8 3-4 4z" />
    <path d="M0 0L28 4M31 4l-9-4v6z" />
    <g fill={c} stroke="none" fontFamily="Liberation Sans" fontSize="15" textAnchor="middle">
      <text x="18" y="-39">X</text>
      <text x="-26" y="-18">Y</text>
      <text x="38" y="11">Z</text>
    </g>
  </g>
);

const Scene = () => (
  <svg role="img" aria-label="Model 3D">
    <defs>
      <linearGradient id="rod" gradientUnits="userSpaceOnUse" x1="387" y1="208" x2="373" y2="301">
        <stop offset="0" stopColor="#526f56" />
        <stop offset=".12" stopColor="#65876a" />
        <stop offset=".4" stopColor="#7fa77f" />
        <stop offset=".58" stopColor="#6f936d" />
        <stop offset=".8" stopColor="#3e5439" />
        <stop offset=".97" stopColor="#0c140a" />
      </linearGradient>
    </defs>
    <g transform="translate(-316 -104)">
      <path d="M387 208L971 296L959 386L392 302C368 301 356 284 356 263C356 236 368 209 387 208z" fill="url(#rod)" />
      <path d="M971 295L387 208C368 209 356 236 356 263C356 284 368 301 392 302L960 387" fill="none" stroke="#6a6ae0" />
      <ellipse cx="964" cy="341" rx="28" ry="46" transform="rotate(8 964 341)" fill="#34452f" stroke="#5f6be0" />
      <path d={helixPath} fill="none" stroke="#e29be6" strokeWidth="1.300" />
      <Triad x={385} y={254} k={0.72} c="#b5ecec" />
      <g fill="none" stroke="#c4dcea">
        <path d="M900 160L1100.500 173L1101 440L901 429z" />
        <path d="M905 277L952 281V298M1000.500 283V300M1047 287L1001 283M1040 253V302M990 300L1040 302M1005 337L1042 339.500M1040 340V388" />
        <path d="M938 277l12 3-12 3zM1014 282l-12 1 12 3zM1038 290l2 11 3-11zM1038 353l2-12 3 12zM1022 300l10 1.500-10 3M1034 298l6 8M1039 298l-4 9" />
        <path d="M952.500 328v10M947 333.500h10M986 311h6l-6-5h7l6-4" />
      </g>
      <path d="M1000 298L952 297V312C953 326 961 335 974 335.500C986 336 999 334 1000 325" fill="none" stroke="#f311ee" strokeWidth="2.200" />
      <path d="M1000.500 300V332" stroke="#f4c8f4" strokeDasharray="5 3" fill="none" />
      <path d="M998 321h5l-2.500 7zM998 331l5 6M1003 331l-5 6" stroke="#c4dcea" fill="none" />
      <path d="M982 318l-9 9M981 323l-6-1M973 327l-3 3 10 5" stroke="#93f4f4" strokeWidth="1.500" strokeDasharray="4 2" fill="none" />
      <g fontFamily="Liberation Sans" fontWeight="700" fontSize="14" fill="#cddfea">
        <text x="957" y="286">55.000</text>
        <text x="1019" y="326">40.000</text>
        <text x="1006" y="386" fill="#b4cbe0">Płaszczyzna Wyciągnięcia-</text>
        <text x="982" y="345" fill="#9df3f3">20.000</text>
      </g>
      <Triad x={358} y={681} />
    </g>
  </svg>
);

const PlaneDialog = () => (
  <Dialog onSubmit={(e) => e.preventDefault()}>
    <DialogTitle>
      <span>Płaszczyzna</span>
      <WinButton type="button" aria-label="Pomoc">
        <svg width="8" height="10" viewBox="0 0 8 10"><L d="M1.500 3c0-3 5-3 5 0 0 2-2.500 2-2.500 4M4 8v1.500" c="#4a5a70" w={1.600} /></svg>
      </WinButton>
      <WinButton type="button" $danger aria-label="Zamknij okno"><Cross c="#fff" s={8} /></WinButton>
    </DialogTitle>
    <DialogBody>
      <div>
        <NameRow>
          <label htmlFor="plane-name">Nazwa</label>
          <NameInput id="plane-name" defaultValue="Płaszczyzna Wyciągnięcia" />
          <CheckLabel><input type="checkbox" defaultChecked disabled />Asocjatywna</CheckLabel>
        </NameRow>
        <Methods>
          <legend>Metoda definiowania</legend>
          {methods.map((m) => (
            <MethodButton key={m} type="button" aria-label={m} $on={m === 'dlgCurveEnd'}><Icon name={m} /></MethodButton>
          ))}
        </Methods>
        <Message>Wybór zakończony</Message>
      </div>
      <Actions>
        <PushButton $main>OK</PushButton>
        <PushButton type="button" $gap={1}>Zastosuj</PushButton>
        <PushButton type="button">Zamknij</PushButton>
        <PushButton type="button" $gap={36}>Zmień</PushButton>
      </Actions>
    </DialogBody>
  </Dialog>
);

export default function App() {
  return (
    <Window>
      <Global />
      <TitleBar>
        <Icon name="app" />
        <TitleText>Edgecam Part Modeler</TitleText>
        <Controls>
          <WinButton type="button" aria-label="Minimalizuj">
            <svg width="12" height="6" viewBox="0 0 12 6"><rect x="1" y="1" width="10" height="3.500" rx="1" fill="#fff" stroke="#556" /></svg>
          </WinButton>
          <WinButton type="button" aria-label="Przywróć">
            <svg width="12" height="11" viewBox="0 0 12 11"><path d="M4.500 1.500h6v5h-6zM1.500 4.500h6v5h-6z" fill="#fff" stroke="#556" /></svg>
          </WinButton>
          <WinButton type="button" $danger aria-label="Zamknij"><Cross c="#fff" s={9} /></WinButton>
        </Controls>
      </TitleBar>
      <MenuBar>
        <Grip $h={11} $after={-5} />
        {menus.map(([a, key, b]) => (
          <MenuItem key={a + key + b} type="button">{a}{key && <u>{key}</u>}{b}</MenuItem>
        ))}
      </MenuBar>
      <ToolRow>
        <ToolBar>
          <Grip $before={4} $after={3} />
          <Tools names={['new', 'open', 'save', 'close', 'copy', 'paste', 'print']} />
          <ToolButton type="button" $w={24} aria-label="Cofnij"><Icon name="undo" /></ToolButton>
          <ToolButton type="button" $w={12} aria-label="Lista cofania"><Caret /></ToolButton>
          <ToolButton type="button" $w={24} aria-label="Ponów"><Icon name="redo" /></ToolButton>
          <ToolButton type="button" $w={12} aria-label="Lista ponawiania"><Caret $c="#7d92b2" /></ToolButton>
          <More />
        </ToolBar>
        <ToolBar>
          <Grip $before={4} $after={3} />
          <Tools names={['e']} />
          <More />
        </ToolBar>
        <ToolBar>
          <Grip $before={4} $after={3} />
          <Tools names={['part', 'sliders']} />
          <More />
        </ToolBar>
        <ToolBar>
          <Grip $before={4} $after={3} />
          <Tools names={['pair', 'pan', 'zoomIn', 'zoomBox', 'zoomFit', 'orbit', 'rotate', 'viewOpen', 'viewBody']} />
          <More />
        </ToolBar>
        <ToolBar>
          <Grip $before={4} $after={3} />
          <Tools names={['wire', 'wireHidden', 'wireOutline', 'shadedSoft', 'shadedEdge', 'shaded', 'eyeCube']} on="shaded" />
          <More />
        </ToolBar>
        <ToolBar>
          <Grip $before={4} $after={3} />
          <Combos>
            {['Kolor', 'Styl', 'Warstwa'].map((n) => (
              <Combo key={n}><select disabled aria-label={n} /><Caret $c="#6f7c8e" /></Combo>
            ))}
          </Combos>
        </ToolBar>
      </ToolRow>

      <Body>
        <Sidebar>
          <Pane $grow={354}>
            <PaneTitle>Model</PaneTitle>
            <Tree>
              {tree.map(([g, icon, label, on]) => (
                <TreeItem key={label} guides={g} icon={icon} label={label} on={on} />
              ))}
            </Tree>
            <PaneTabs>
              <PaneTab type="button"><Icon name="page" />Model</PaneTab>
              <PaneTab type="button" $yellow><Icon name="drawing" />Rysunek</PaneTab>
            </PaneTabs>
          </Pane>
          <Pane $grow={324}>
            <PaneTitle>Właściwości</PaneTitle>
            <Combo $w="auto" $h={21} $line="#70757c" $bg="linear-gradient(#f4f4f4, #d6d6d6)" $font={sans}>
              <select aria-label="Obiekt"><option>Płaszczyzna Wyciągnięcia-1</option></select>
              <Caret />
            </Combo>
            <PropTools>
              <ToolButton type="button" $on aria-label="Kategorie"><Icon name="categories" /></ToolButton>
              <ToolButton type="button" aria-label="Sortuj"><Icon name="sortAz" /></ToolButton>
              <ToolButton type="button" aria-label="Opcje"><Icon name="star" /></ToolButton>
            </PropTools>
            <PropTable>
              <tbody>
                <tr><th colSpan={2} scope="colgroup"><Expander type="button" aria-label="Zwiń" />Płaszcz.</th></tr>
                <tr><th scope="row">Obróbcze CPL</th><td>No</td></tr>
              </tbody>
            </PropTable>
            <PropBody />
            <PropHelp />
          </Pane>
        </Sidebar>

        <Main>
          <DocStrip>
            <NavButton type="button" aria-label="Poprzedni">
              <svg width="6" height="8" viewBox="0 0 6 8"><L d="M5 .5L1 4l4 3.500z" c="#0a1020" /></svg>
            </NavButton>
            <DocTab type="button" $slant $w={150} $shift={1} $bg="linear-gradient(#fafbff, #d6def6)"><Icon name="page" />BezNazwyModel1</DocTab>
            <DocTab type="button" $w={140} $bg="linear-gradient(#ffe38a, #fff0b4 50%, #ffd966)"><Icon name="page" />BezNazwyModel2</DocTab>
            <DocTab type="button" $slant $on $w={152} $shift={-21} $bg="linear-gradient(#d9e6bd, #c4d59c)"><Icon name="page" />BezNazwyModel3</DocTab>
            <Spacer />
            <NavButton type="button" aria-label="Następny">
              <svg width="6" height="8" viewBox="0 0 6 8"><L d="M1 .5L5 4 1 7.500z" c="#0a1020" /></svg>
            </NavButton>
            <NavButton type="button" aria-label="Zamknij dokument"><Cross s={9} /></NavButton>
          </DocStrip>
          <Frame>
            <FrameInner>
              <View><Scene /></View>
              <SheetTabs>
                <SheetTab type="button" $on>Wszystko</SheetTab>
                <SheetTab type="button">Część</SheetTab>
                <SheetTab type="button">2D Drutowy</SheetTab>
                <SheetTab type="button">3D Drutowy</SheetTab>
              </SheetTabs>
            </FrameInner>
          </Frame>
        </Main>

        <ToolDock>
          <Palette $h={321}>
            <PaletteGrip $gap={4} />
            <ModeBox>
              <Combo $w="auto" $h={19} $bg="#fff" $line="#c4dbf6">
                <select aria-label="Tryb"><option>Model</option></select>
                <Caret />
              </Combo>
            </ModeBox>
            <PaletteGrid $cols="22px 14px 24px 9px">
              {dockTools.map(([a, am, b, bm]) => (
                <React.Fragment key={a}>
                  <ToolButton type="button" aria-label={a} $on={a === 'pointer'}><Icon name={a} /></ToolButton>
                  {am ? <Caret /> : <span />}
                  {b ? <ToolButton type="button" aria-label={b}><Icon name={b} /></ToolButton> : <span />}
                  {bm ? <Caret $c={bm === 2 ? '#7d92b2' : undefined} /> : <span />}
                </React.Fragment>
              ))}
            </PaletteGrid>
          </Palette>
          <Palette $h={77}><PaletteGrip /></Palette>
          <Palette $h={162}>
            <PaletteGrip $gap={2} />
            <PaletteGrid $cols="37px 28px">
              {snapTools.map((n, i) => (n
                ? <ToolButton key={i} type="button" aria-label={n} $on={n.startsWith('snap')}><Icon name={n} /></ToolButton>
                : <span key={i} />))}
            </PaletteGrid>
          </Palette>
        </ToolDock>
      </Body>

      <StatusBar>
        <p>Pomoc, wciśnij F1</p>
        <StatusCell $w={77} $off>Next Solution</StatusCell>
        <StatusCell $w={102}><span>XC</span><span>274.820mm</span></StatusCell>
        <StatusCell $w={102}><span>YC</span><span>-311.191mm</span></StatusCell>
      </StatusBar>

      <PlaneDialog />
      <Markup aria-hidden="true">
        <g fill="none" stroke="#e01a26" strokeWidth="2.500" strokeLinejoin="round" strokeLinecap="round">
          <path d="M413 553L648 453L901 397M872 393l29 4-12 15" />
          <path d="M1239 157L1070 560L752 564M775 558l-23 6 28 10" />
        </g>
      </Markup>
    </Window>
  );
}
